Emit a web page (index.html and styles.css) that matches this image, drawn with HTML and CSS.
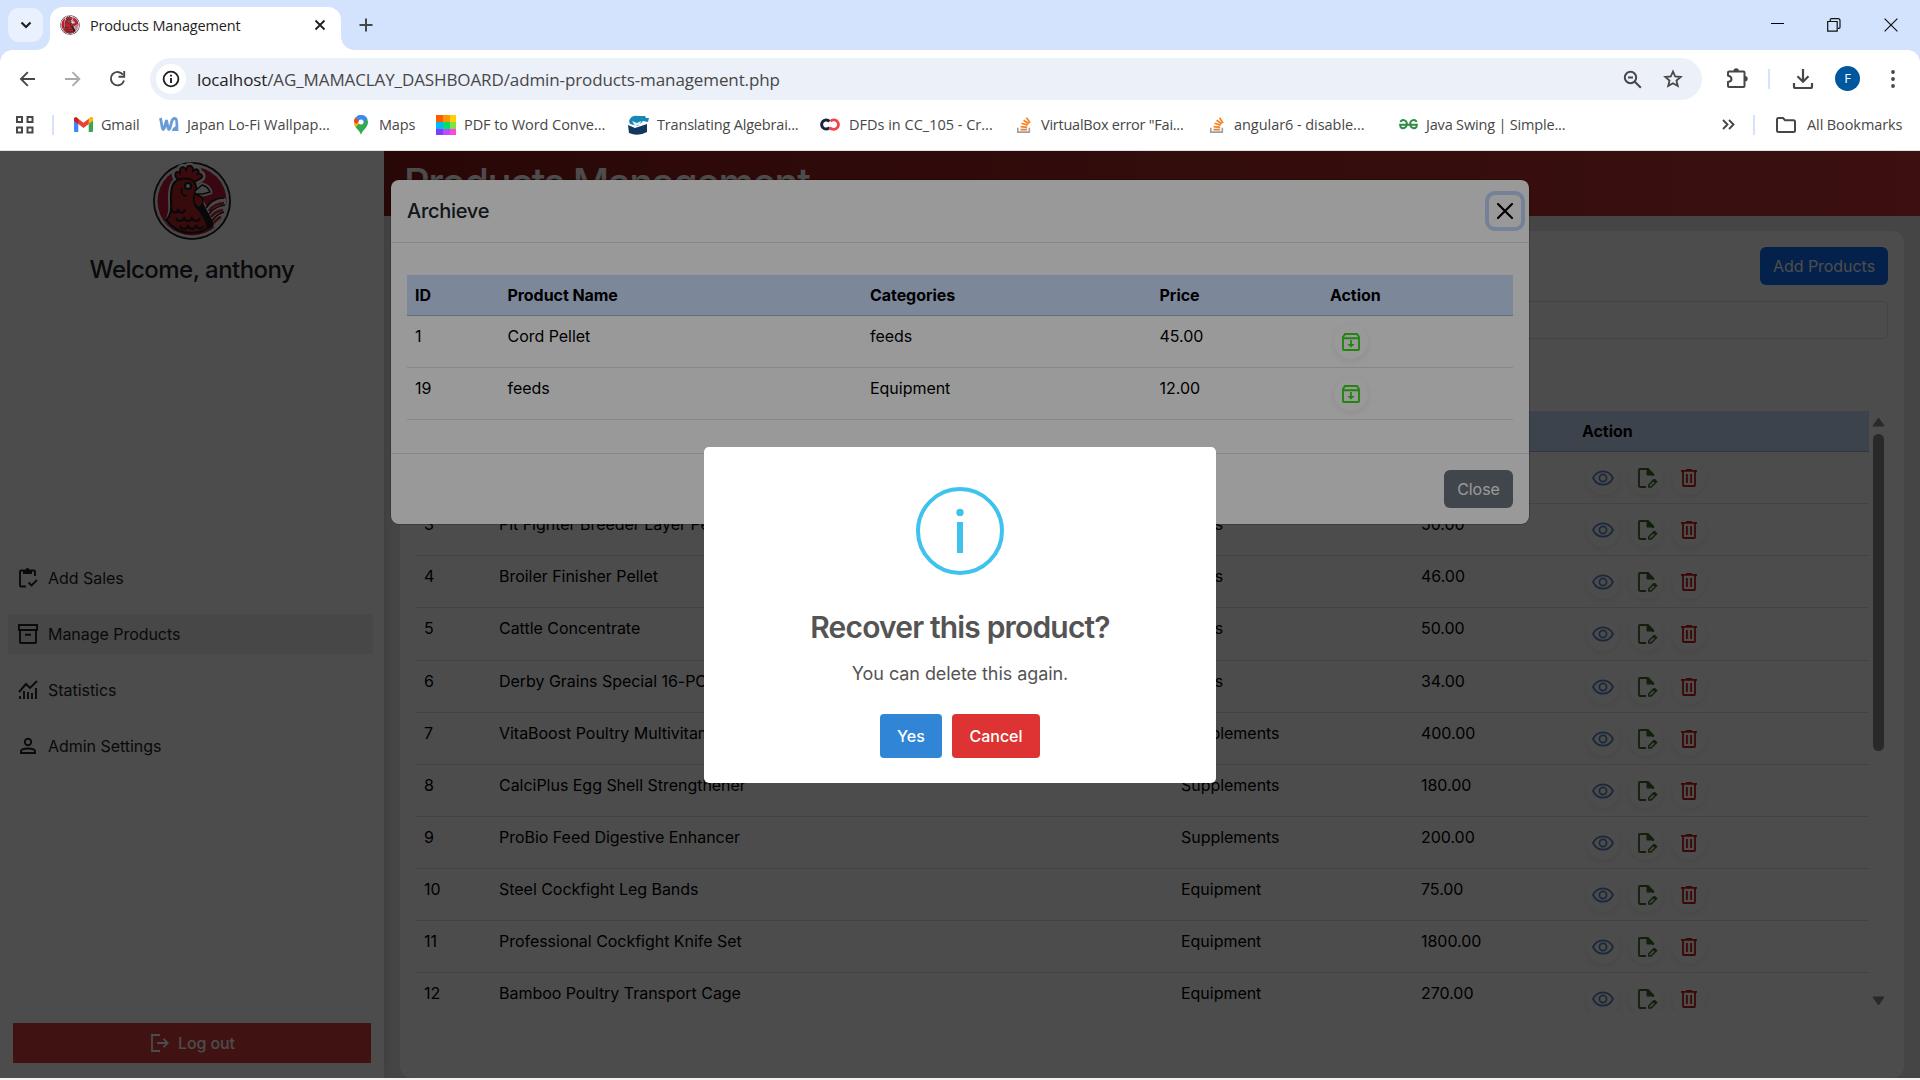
FILE: index.html
```html
<!DOCTYPE html>
<html lang="en">
<head>
<meta charset="utf-8">
<title>Products Management</title>
<link rel="stylesheet" href="styles.css">
</head>
<body>
<svg class="defs" width="0" height="0" aria-hidden="true">
  <symbol id="rooster" viewBox="0 0 80 80">
    <circle cx="40" cy="40" r="39" fill="#1d1d1f"/>
    <circle cx="40" cy="40" r="37.200" fill="#f4f0ef"/>
    <circle cx="40" cy="40" r="34.500" fill="#c0193a"/>
    <g fill="#f4f0ef" stroke="#f4f0ef" stroke-width="7" stroke-linejoin="round">
      <path d="M25 18c-4-6 0-9 3-6-1-6 4-8 6-3 1-6 8-5 7 1 4-4 7 0 5 3 4-1 6 3 2 5l-6 3-10-2z"/>
      <path d="M22 22c5-6 17-6 21 0l3 12c4 9 8 18 12 28C48 73 28 72 16 59c5-6 3-15 3-22 0-6 0-11 3-15z" stroke-width="6"/>
      <path d="M43 30l7-6c4 1 7 4 8 7l-7 2-8 0z" stroke-width="5"/>
      <path d="M56 49c4-6 9-9 16-10v12l-9 13z" stroke-width="4"/>
    </g>
    <path d="M25 18c-4-6 0-9 3-6-1-6 4-8 6-3 1-6 8-5 7 1 4-4 7 0 5 3 4-1 6 3 2 5l-6 3-10-2z" fill="#c8252f" stroke="#1d1d1f" stroke-width="1.800"/>
    <path d="M22 22c5-6 17-6 21 0l3 12c4 9 10 20 15 29C48 76 26 75 14 59c7-6 5-15 5-22 0-6 0-11 3-15z" fill="#b8242b" stroke="#1d1d1f" stroke-width="2.200"/>
    <path d="M46 40c6 7 11 14 15 22l-6 6c-2-10-6-16-13-23z" fill="#1d1d1f"/>
    <path d="M43 30l7-6c4 1 7 4 8 7l-7 2-8 0z" fill="#f4f0ef" stroke="#1d1d1f" stroke-width="1.500"/>
    <path d="M43 33c4 2 8 2 8 6s-2 8-5 7-6-8-3-13z" fill="#c8252f" stroke="#1d1d1f" stroke-width="1.800"/>
    <circle cx="36" cy="25" r="3" fill="#f4f0ef" stroke="#1d1d1f" stroke-width="2.200"/>
    <path d="M30 27c-2 5 1 8 5 8" fill="none" stroke="#1d1d1f" stroke-width="1.600"/>
    <path d="M54 47c4-7 10-10 18-10M57 53c4-6 9-8 16-9M60 60c4-6 8-8 12-9" fill="none" stroke="#1d1d1f" stroke-width="1.500"/>
    <path d="M57 50c4-6 9-7 15-8M59 56c4-5 7-6 12-7M62 62c3-4 4-5 7-6" fill="none" stroke="#c8252f" stroke-width="2.600"/>
    <path d="M19 48c2 5 6 5 7 0 1 5 6 5 7 0M24 57c2 4 6 4 8 0 2 4 6 4 8 0 2 4 6 4 8 0M28 65c2 4 6 4 8 0 2 4 6 4 8 0 2 3 6 3 8 0" fill="none" stroke="#1d1d1f" stroke-width="2"/>
  </symbol>
  <symbol id="eye" viewBox="0 0 22 16"><path d="M1 8C5.500-.9 16.500-.9 21 8 16.500 16.900 5.500 16.900 1 8z" fill="none" stroke="currentColor" stroke-width="1.700"/><circle cx="11" cy="8" r="3.600" fill="none" stroke="currentColor" stroke-width="1.700"/></symbol>
  <symbol id="edit" viewBox="0 0 20 20"><path d="M8 19H1.900a.9.900 0 0 1-.9-.9V1.900a.9.900 0 0 1 .9-.9H10l5.200 5.400V8" fill="none" stroke="currentColor" stroke-width="1.800"/><path d="M9 1v6h6.200z" fill="currentColor" stroke="currentColor"/><path d="M10.900 19v-2.200l4.700-4.700 2.200 2.200-4.700 4.700z" fill="none" stroke="currentColor" stroke-width="1.500"/><path d="M15 12.500l1.500-1.500 2.500 2.500-1.500 1.500z" fill="currentColor" stroke="currentColor"/></symbol>
  <symbol id="trash" viewBox="0 0 16 18"><path d="M0 1.900h16M5 .8h6M2 2v14.200c0 .5.300.8.800.8h10.400c.5 0 .8-.3.800-.8V2M5.900 5v9M10.100 5v9" fill="none" stroke="currentColor" stroke-width="1.800"/></symbol>
  <symbol id="recover" viewBox="0 0 18 18"><path d="M1 5.300h16M1 4.500v11.700c0 .5.300.8.800.8h14.400c.5 0 .8-.3.800-.8V4L15 1H3L1 4z" fill="none" stroke="currentColor" stroke-width="1.900"/><path d="M8.100 7h1.800v4h2.800L9 14.600 5.300 11h2.800z" fill="currentColor"/></symbol>
  <symbol id="overflow" viewBox="0 0 18 20"><path d="M2 13v5h13v-5" fill="none" stroke="#9aa0a8" stroke-width="1.800"/><path d="M5 15.300h7.500M5.200 11.800l7.400.9M6.200 8l7 2.200M8.500 4.600l6 4M11.800 1.800l4 5.800" stroke="#f48024" stroke-width="1.900"/></symbol>
</svg>

<header class="browser">
  <div class="tabstrip">
    <button class="tab-search"><svg width="12" height="8" viewBox="0 0 12 8"><path d="M1.500 1.500L6 6l4.500-4.500" fill="none" stroke="#1f1f1f" stroke-width="2.200"/></svg></button>
    <div class="tab">
      <svg class="favicon" width="20" height="20"><use href="#rooster"/></svg>
      <span class="tab-title">Products Management</span>
      <svg width="12" height="12" viewBox="0 0 12 12"><path d="M1.500 1.500l9 9M10.500 1.500l-9 9" stroke="#1f1f1f" stroke-width="1.800"/></svg>
    </div>
    <svg class="new-tab" width="14" height="14" viewBox="0 0 14 14"><path d="M7 0.500v13M.5 7h13" stroke="#474747" stroke-width="2"/></svg>
    <div class="window-controls">
      <svg width="14" height="14" viewBox="0 0 14 14"><path d="M1 5.500h13" stroke="#000"/></svg>
      <svg width="14" height="14" viewBox="0 0 14 14"><path d="M.7 3.500h9.500v9.700H.7zM3.200 3V2q0-1.300 1.300-1.300h6.500q2 0 2 2v6.600q0 1-1 1h-1" fill="none" stroke="#111" stroke-width="1.200"/></svg>
      <svg width="14" height="14" viewBox="0 0 14 14"><path d="M.6.6l12.800 12.800M13.400.6L.6 13.400" stroke="#111" stroke-width="1.200"/></svg>
    </div>
  </div>
  <div class="toolbar">
    <div class="nav-buttons">
      <svg width="18" height="18" viewBox="0 0 18 18"><path d="M16 9H2.500M8.800 2.200L2 9l6.800 6.800" fill="none" stroke="#474747" stroke-width="1.900"/></svg>
      <svg width="18" height="18" viewBox="0 0 18 18"><path d="M1 9h14M8.500 2.200L15.300 9l-6.800 6.800" fill="none" stroke="#aaa" stroke-width="1.900"/></svg>
      <svg width="18" height="18" viewBox="0 0 18 18"><path d="M14 4.700A6.700 6.700 0 1 0 15 10.500" fill="none" stroke="#474747" stroke-width="1.900"/><path d="M15.200 1v5.800H9.500" fill="none" stroke="#474747" stroke-width="1.900"/></svg>
    </div>
    <div class="omnibox">
      <span class="site-info"><svg width="18" height="18" viewBox="0 0 18 18"><circle cx="9" cy="9" r="7.400" fill="none" stroke="#1f1f1f" stroke-width="1.800"/><path d="M9 8v5M9 4.800v1.800" stroke="#1f1f1f" stroke-width="1.900"/></svg></span>
      <span class="url"><b>localhost</b>/AG_MAMACLAY_DASHBOARD/admin-products-management.php</span>
      <svg width="19" height="19" viewBox="0 0 19 19"><circle cx="7.500" cy="7.500" r="5.700" fill="none" stroke="#474747" stroke-width="2"/><path d="M11.800 11.800l6 6M5 7.500h5" stroke="#474747" stroke-width="2"/></svg>
      <svg width="20" height="20" viewBox="0 0 20 20"><path d="M10 2.500l2.200 5 5.500.5-4.200 3.600 1.300 5.400L10 14.200 5.200 17l1.300-5.400L2.300 8l5.500-.5z" fill="none" stroke="#474747" stroke-width="1.800"/></svg>
    </div>
    <svg class="ext" width="22" height="22" viewBox="0 0 22 22"><path d="M3 4.500h14.500q1 0 1 1V19q0 1-1 1H3q-1 0-1-1v-4q3.500-.5 3.500-3T2 8.500v-3q0-1 1-1z" fill="none" stroke="#474747" stroke-width="2"/><path d="M7.500 4a2.700 2.700 0 0 1 5.400 0zM19 9a2.700 2.700 0 0 1 0 5.400z" fill="#474747"/></svg>
    <i class="divider"></i>
    <svg class="download" width="22" height="22" viewBox="0 0 22 22"><path d="M11 1v12M5.500 8.300l5.500 5.500 5.500-5.500M2 15v3.500q0 1.500 1.500 1.500h15q1.500 0 1.500-1.500V15" fill="none" stroke="#474747" stroke-width="2.200"/></svg>
    <span class="avatar">F</span>
    <svg class="menu" width="4" height="18" viewBox="0 0 4 18"><circle cx="2" cy="2" r="1.900" fill="#474747"/><circle cx="2" cy="9" r="1.900" fill="#474747"/><circle cx="2" cy="16" r="1.900" fill="#474747"/></svg>
  </div>
  <nav class="bookmarks">
    <svg class="apps" width="19" height="19" viewBox="0 0 19 19"><path d="M2 2h5v5H2zM12.500 2h5v5h-5zM2 12.500h5v5H2zM12.500 12.500h5v5h-5z" fill="none" stroke="#474747" stroke-width="2"/></svg>
    <i class="divider"></i>
    <a class="bm gmail"><svg width="19" height="15" viewBox="0 0 19 15"><path d="M0 2v12q0 1 1 1h3.300V6z" fill="#4285f4"/><path d="M14.700 6v9H18q1 0 1-1V2z" fill="#34a853"/><path d="M0 2.500Q0 0 2.300.3l7.200 5.500L16.700.3Q19 0 19 2.500l-1 2-8.500 6.500L1 4.500z" fill="#ea4335"/><path d="M14.700 2v5L19 3.800V2.500Q19 0 16.700.3z" fill="#fbbc04"/><path d="M0 2.500v1.300L4.300 7V2L2.300.3Q0 0 0 2.500z" fill="#c5221f"/></svg><span>Gmail</span></a>
    <a class="bm japan"><svg width="20" height="15" viewBox="0 0 20 15"><path d="M1.500 1l1.800 10q.8 3 2 0L7.500 3l1.500 8q.8 3 2 0L13 3.500q1.500-3 4-1.500 1 1 1 12" fill="none" stroke="#6a9bd8" stroke-width="2.800"/><path d="M13 14q0-4 5-5v5z" fill="#6a9bd8"/></svg><span>Japan Lo-Fi Wallpap...</span></a>
    <a class="bm maps"><svg width="14" height="20" viewBox="0 0 14 20"><path d="M7 20C6 15 0 13 0 7a7 7 0 0 1 14 0c0 6-6 8-7 13z" fill="#34a853"/><path d="M0 7a7 7 0 0 1 2-5l5 5-5.500 5Q0 9.500 0 7z" fill="#fbbc04"/><path d="M0 6.500Q0 4.500 1.800 2.400L6 6 2 9z" fill="#ea4335"/><path d="M1.800 2.400Q4 0 7 0q4.500 0 6.400 4L8 9 5 6z" fill="#4285f4"/><circle cx="7" cy="7" r="2.500" fill="#fff"/></svg><span>Maps</span></a>
    <a class="bm pdf"><svg width="20" height="20" viewBox="0 0 20 20"><path d="M0 0h7v7H0z" fill="#ff5a00"/><path d="M7 0h7v7H7z" fill="#ff9500"/><path d="M14 0h6v7h-6z" fill="#ffd000"/><path d="M0 7h7v7H0z" fill="#00b8f5"/><path d="M7 7h7v7H7z" fill="#00e06a"/><path d="M14 7h6v7h-6z" fill="#83e043"/><path d="M0 14h7v6H0z" fill="#7d3cff"/><path d="M7 14h7v6H7z" fill="#b94cff"/><path d="M14 14h6v6h-6z" fill="#ff45e0"/></svg><span>PDF to Word Conve...</span></a>
    <a class="bm trans"><svg width="21" height="20" viewBox="0 0 21 20"><path d="M1 6Q3 0 10 1l7 0 1 2 3 0-1 4-5-1-5 5L2 9z" fill="#1788b5"/><path d="M0 10l7 3 12-4v8q-9 5-18 1z" fill="#13385f"/><path d="M4 6l5 2 4-2-1 4-5 1z" fill="#dff2f8"/></svg><span>Translating Algebrai...</span></a>
    <a class="bm dfd"><svg width="21" height="13" viewBox="0 0 21 13"><path d="M9.500 3.500A4.500 4.500 0 1 0 9.500 9.500" fill="none" stroke="#1b2440" stroke-width="3"/><path d="M9.500 9.500q2 2 4.500 1.800a4.700 4.700 0 1 0-3.500-8" fill="none" stroke="#f0434b" stroke-width="2.800"/></svg><span>DFDs in CC_105 - Cr...</span></a>
    <a class="bm vbox"><svg width="16" height="18"><use href="#overflow"/></svg><span>VirtualBox error "Fai...</span></a>
    <a class="bm ang"><svg width="16" height="18"><use href="#overflow"/></svg><span>angular6 - disable...</span></a>
    <a class="bm java"><svg width="19" height="11" viewBox="0 0 19 11"><path d="M1.200 2.800Q4-.5 7 2.300q2 3-.5 6-3 2.200-5-.5L1.200 5.800h16.600l-.3 2q-2 2.700-5 .5-2.500-3-.5-6Q15-.5 17.800 2.800" fill="none" stroke="#2f8d46" stroke-width="2"/></svg><span>Java Swing | Simple...</span></a>
    <svg class="more" width="13" height="11" viewBox="0 0 13 11"><path d="M1 1l4.500 4.500L1 10M7 1l4.500 4.500L7 10" fill="none" stroke="#474747" stroke-width="1.900"/></svg>
    <i class="divider last"></i>
    <a class="bm all"><svg width="20" height="16" viewBox="0 0 20 16"><path d="M1 2.500Q1 1 2.500 1H7l2 2.200h8.500q1.500 0 1.500 1.500v8.800q0 1.500-1.500 1.500h-15Q1 15 1 13.500z" fill="none" stroke="#474747" stroke-width="2"/></svg><span>All Bookmarks</span></a>
  </nav>
</header>

<div class="page">
  <aside class="sidebar">
    <svg class="logo" width="80" height="80"><use href="#rooster"/></svg>
    <h4 class="welcome">Welcome, anthony</h4>
    <nav class="side-nav">
      <a><svg width="20" height="20" viewBox="0 0 20 20"><path d="M17 8V3.500q0-1-1-1H3q-1 0-1 1V17.500q0 1 1 1h5M10.500 14.500l3 3L19 12" fill="none" stroke="currentColor" stroke-width="1.900"/><path d="M5 2h2.500a2 2 0 0 1 4 0H14v4H5z" fill="currentColor"/></svg>Add Sales</a>
      <a class="active"><svg width="20" height="20" viewBox="0 0 20 20"><path d="M1 1h18v5H1zM2 6v12.200q0 .8.800.8h14.400q.8 0 .8-.8V6M7 10.800h6" fill="none" stroke="currentColor" stroke-width="1.900"/></svg>Manage Products</a>
      <a><svg width="20" height="20" viewBox="0 0 20 20"><path d="M1 12l7-8 4 4 7-7" fill="none" stroke="currentColor" stroke-width="1.900"/><path d="M2 19v-3M6 19v-8M10 19v-7M14 19v-6M18 19V8" stroke="currentColor" stroke-width="1.900"/></svg>Statistics</a>
      <a><svg width="20" height="20" viewBox="0 0 20 20"><circle cx="10" cy="6" r="3.200" fill="none" stroke="currentColor" stroke-width="1.900"/><path d="M3 17v-1.500c0-4 14-4 14 0V17z" fill="none" stroke="currentColor" stroke-width="1.900"/></svg>Admin Settings</a>
    </nav>
    <a class="logout"><svg width="18" height="18" viewBox="0 0 18 18"><path d="M9 1H1v16h8M6 9h10M12.500 4.800L16.700 9l-4.200 4.200" fill="none" stroke="currentColor" stroke-width="1.800"/></svg>Log out</a>
  </aside>
  <main class="main">
    <div class="banner"><h1>Products Management</h1></div>
    <section class="card">
      <div class="card-top"><button class="btn primary">Add Products</button></div>
      <div class="search"></div>
      <div class="table-scroll">
        <div class="table products">
          <div class="tr th"><span>ID</span><span>Product Name</span><span>Categories</span><span>Price</span><span>Action</span></div>
          <div class="tr"><span></span><span></span><span></span><span></span><span class="acts"><i class="c-eye"><svg width="22" height="16"><use href="#eye"/></svg></i><i class="c-edit"><svg width="20" height="20"><use href="#edit"/></svg></i><i class="c-del"><svg width="16" height="18"><use href="#trash"/></svg></i></span></div>
          <div class="tr"><span>3</span><span>Pit Fighter Breeder Layer Pellet</span><span>feeds</span><span>50.00</span><span class="acts"><i class="c-eye"><svg width="22" height="16"><use href="#eye"/></svg></i><i class="c-edit"><svg width="20" height="20"><use href="#edit"/></svg></i><i class="c-del"><svg width="16" height="18"><use href="#trash"/></svg></i></span></div>
          <div class="tr"><span>4</span><span>Broiler Finisher Pellet</span><span>feeds</span><span>46.00</span><span class="acts"><i class="c-eye"><svg width="22" height="16"><use href="#eye"/></svg></i><i class="c-edit"><svg width="20" height="20"><use href="#edit"/></svg></i><i class="c-del"><svg width="16" height="18"><use href="#trash"/></svg></i></span></div>
          <div class="tr"><span>5</span><span>Cattle Concentrate</span><span>feeds</span><span>50.00</span><span class="acts"><i class="c-eye"><svg width="22" height="16"><use href="#eye"/></svg></i><i class="c-edit"><svg width="20" height="20"><use href="#edit"/></svg></i><i class="c-del"><svg width="16" height="18"><use href="#trash"/></svg></i></span></div>
          <div class="tr"><span>6</span><span>Derby Grains Special 16-PC</span><span>feeds</span><span>34.00</span><span class="acts"><i class="c-eye"><svg width="22" height="16"><use href="#eye"/></svg></i><i class="c-edit"><svg width="20" height="20"><use href="#edit"/></svg></i><i class="c-del"><svg width="16" height="18"><use href="#trash"/></svg></i></span></div>
          <div class="tr"><span>7</span><span>VitaBoost Poultry Multivitamins</span><span>Supplements</span><span>400.00</span><span class="acts"><i class="c-eye"><svg width="22" height="16"><use href="#eye"/></svg></i><i class="c-edit"><svg width="20" height="20"><use href="#edit"/></svg></i><i class="c-del"><svg width="16" height="18"><use href="#trash"/></svg></i></span></div>
          <div class="tr"><span>8</span><span>CalciPlus Egg Shell Strengthener</span><span>Supplements</span><span>180.00</span><span class="acts"><i class="c-eye"><svg width="22" height="16"><use href="#eye"/></svg></i><i class="c-edit"><svg width="20" height="20"><use href="#edit"/></svg></i><i class="c-del"><svg width="16" height="18"><use href="#trash"/></svg></i></span></div>
          <div class="tr"><span>9</span><span>ProBio Feed Digestive Enhancer</span><span>Supplements</span><span>200.00</span><span class="acts"><i class="c-eye"><svg width="22" height="16"><use href="#eye"/></svg></i><i class="c-edit"><svg width="20" height="20"><use href="#edit"/></svg></i><i class="c-del"><svg width="16" height="18"><use href="#trash"/></svg></i></span></div>
          <div class="tr"><span>10</span><span>Steel Cockfight Leg Bands</span><span>Equipment</span><span>75.00</span><span class="acts"><i class="c-eye"><svg width="22" height="16"><use href="#eye"/></svg></i><i class="c-edit"><svg width="20" height="20"><use href="#edit"/></svg></i><i class="c-del"><svg width="16" height="18"><use href="#trash"/></svg></i></span></div>
          <div class="tr"><span>11</span><span>Professional Cockfight Knife Set</span><span>Equipment</span><span>1800.00</span><span class="acts"><i class="c-eye"><svg width="22" height="16"><use href="#eye"/></svg></i><i class="c-edit"><svg width="20" height="20"><use href="#edit"/></svg></i><i class="c-del"><svg width="16" height="18"><use href="#trash"/></svg></i></span></div>
          <div class="tr"><span>12</span><span>Bamboo Poultry Transport Cage</span><span>Equipment</span><span>270.00</span><span class="acts"><i class="c-eye"><svg width="22" height="16"><use href="#eye"/></svg></i><i class="c-edit"><svg width="20" height="20"><use href="#edit"/></svg></i><i class="c-del"><svg width="16" height="18"><use href="#trash"/></svg></i></span></div>
        </div>
        <div class="scrollbar">
          <svg width="13" height="10" viewBox="0 0 13 10"><path d="M6.500 1L12 9H1z" fill="#8b8b8b" stroke="#8b8b8b" stroke-linejoin="round"/></svg>
          <i class="thumb"></i>
          <svg class="down" width="13" height="10" viewBox="0 0 13 10"><path d="M6.500 9L12 1H1z" fill="#8b8b8b" stroke="#8b8b8b" stroke-linejoin="round"/></svg>
        </div>
      </div>
    </section>
  </main>

  <div class="backdrop">
    <div class="modal">
      <div class="modal-header"><h5>Archieve</h5><button class="btn-close"><svg width="16" height="16" viewBox="0 0 16 16"><path d="M1 1l14 14M15 1L1 15" stroke="#000" stroke-width="2.200" stroke-linecap="round"/></svg></button></div>
      <div class="modal-body">
        <div class="table archive">
          <div class="tr th"><span>ID</span><span>Product Name</span><span>Categories</span><span>Price</span><span>Action</span></div>
          <div class="tr"><span>1</span><span>Cord Pellet</span><span>feeds</span><span>45.00</span><span class="acts"><i class="c-rec"><svg width="18" height="18"><use href="#recover"/></svg></i></span></div>
          <div class="tr"><span>19</span><span>feeds</span><span>Equipment</span><span>12.00</span><span class="acts"><i class="c-rec"><svg width="18" height="18"><use href="#recover"/></svg></i></span></div>
        </div>
      </div>
      <div class="modal-footer"><button class="btn secondary">Close</button></div>
    </div>
  </div>

  <div class="alert-overlay">
    <div class="alert">
      <div class="alert-icon"><svg width="88" height="88" viewBox="0 0 88 88"><circle cx="44" cy="44" r="42" fill="none" stroke="#3fc3ee" stroke-width="4"/><circle cx="44" cy="25.500" r="3.700" fill="#3fc3ee"/><path d="M41 35h6v31h-6z" fill="#3fc3ee"/></svg></div>
      <h2>Recover this product?</h2>
      <p>You can delete this again.</p>
      <div class="alert-actions"><button class="yes">Yes</button><button class="cancel">Cancel</button></div>
    </div>
  </div>
</div>
</body>
</html>
```
FILE: styles.css
```css
* { box-sizing: border-box; }
body { margin: 0; width: 1920px; height: 1080px; overflow: hidden; background: #f6f2ef; font-family: Inter, "Liberation Sans", sans-serif; font-size: 16px; line-height: 24px; color: #000; }
h1, h2, h4, h5, p { margin: 0; }
button { border: 0; padding: 0; font: inherit; }
svg { display: block; flex: none; }
.defs { position: absolute; }

/* browser frame */
.browser { height: 151px; background: #fff; border-bottom: 1px solid #dde5e2; font-family: "Open Sans", "Noto Sans", sans-serif; color: #474747; }
.tabstrip { height: 50px; background: #d3e3fd; display: flex; align-items: flex-start; padding: 7px 22px 0 8px; }
.tab-search { width: 35px; height: 34px; margin: 1px 7px 0 0; border-radius: 11px; background: #e9f1fe; display: flex; align-items: center; justify-content: center; }
.tab { position: relative; width: 291px; height: 43px; background: #fff; border-radius: 13px 13px 0 0; display: flex; align-items: center; padding: 0 15px 7px 10px; color: #1f1f1f; font-size: 14.500px; }
.tab::before, .tab::after { content: ""; position: absolute; bottom: 0; width: 13px; height: 13px; }
.tab::before { left: -13px; background: radial-gradient(circle at 0 0, transparent 12.500px, #fff 13px); }
.tab::after { right: -13px; background: radial-gradient(circle at 100% 0, transparent 12.500px, #fff 13px); }
.tab-title { flex: 1; margin-left: 10px; padding-top: 1px; white-space: nowrap; letter-spacing: -.17px; }
.new-tab { margin: 11px 0 0 18px; }
.window-controls { margin: 11px 0 0 auto; display: flex; gap: 43px; }
.toolbar { height: 50px; padding-top: 8px; display: flex; align-items: flex-start; background: radial-gradient(circle at 12px 12px, #fff 11.500px, #d3e3fd 12px) 0 0 / 12px 12px no-repeat, radial-gradient(circle at 0 12px, #fff 11.500px, #d3e3fd 12px) 100% 0 / 12px 12px no-repeat, #fff; }
.nav-buttons { width: 150px; padding: 12px 0 0 19px; display: flex; gap: 27px; }
.omnibox { width: 1552px; height: 42px; border-radius: 21px; background: #ebf0f9; display: flex; align-items: center; padding: 0 19px 0 6px; gap: 21px; }
.site-info { width: 30px; height: 30px; border-radius: 50%; background: #fff; display: flex; align-items: center; justify-content: center; }
.url { flex: 1; font-size: 17px; letter-spacing: -.11px; margin-left: -10px; padding-top: 1px; white-space: nowrap; }
.url b { font-weight: 400; color: #1f1f1f; }
.ext { margin: 9px 0 0 24px; }
.divider { width: 2px; height: 20px; background: #d3e3fd; }
.toolbar .divider { margin: 11px 0 0 20px; }
.download { margin: 10px 0 0 22px; }
.avatar { width: 25px; height: 25px; margin: 8px 0 0 21px; border-radius: 50%; background: #00579e; color: #fff; font-size: 13px; line-height: 25px; text-align: center; }
.menu { margin: 12px 0 0 31px; }
.bookmarks { height: 49px; display: flex; align-items: center; padding-left: 15px; font-size: 14.500px; white-space: nowrap; }
.bookmarks .divider { margin-left: 18px; margin-right: 20px; }
.bookmarks .last { margin-right: 21px; }
.bm { display: flex; align-items: center; gap: 8px; letter-spacing: -.18px; }
.gmail { width: 85px; } .japan { width: 195px; letter-spacing: -.03px; } .maps { width: 82px; gap: 11px; } .pdf { width: 192px; letter-spacing: -.06px; } .trans { width: 192px; } .dfd { width: 196px; letter-spacing: 0; } .vbox { width: 193px; gap: 9px; letter-spacing: -.24px; } .ang { width: 190px; gap: 9px; letter-spacing: -.05px; } .java { width: 323px; } .all { gap: 11px; letter-spacing: -.1px; }

/* application */
.page { position: relative; height: 927px; display: flex; overflow: hidden; background: #fff; }
.sidebar { width: 384px; background: #fff; box-shadow: 0 0 12px rgba(0, 0, 0, .15); z-index: 1; display: flex; flex-direction: column; }
.logo { margin: 10px auto 0; }
.welcome { margin-top: 14px; text-align: center; font-size: 24px; line-height: 30px; font-weight: 500; letter-spacing: -.53px; color: #212529; }
.side-nav { margin-top: 273px; padding: 0 11px 0 8px; display: flex; flex-direction: column; gap: 16px; }
.side-nav a { height: 40px; padding-left: 10px; display: flex; align-items: center; gap: 10px; letter-spacing: -.04px; color: #212529; }
.side-nav .active { background: #eee; }
.logout { height: 40px; margin: auto 13px 15px; padding-left: 2px; background: #d93c3e; color: #fff; display: flex; align-items: center; justify-content: center; gap: 9px; font-weight: 500; letter-spacing: -.1px; }
.main { width: 1536px; background: #e9e9e9; }
.banner { height: 65px; padding: 8px 20px; background: linear-gradient(90deg, #8b1a1a, #c93636); color: #fff; }
.banner h1 { font-size: 40px; line-height: 48px; font-weight: 500; letter-spacing: -1.450px; white-space: nowrap; }
.card { width: 1504px; height: 847px; margin: 15px 0 0 16px; padding: 16px; border-radius: 12px; background: #fff; }
.card-top { display: flex; justify-content: flex-end; }
.btn { height: 38px; border-radius: 6px; color: #fff; font-size: 16px; letter-spacing: -.04px; }
.primary { width: 128px; background: #0d6efd; }
.search { height: 38px; margin: 16px 0 72px; border: 1px solid #dee2e6; border-radius: 6px; }
.table-scroll { height: 600px; display: flex; overflow: hidden; }
.table .tr { display: grid; height: 52.150px; border-bottom: 1px solid #dee2e6; letter-spacing: -.03px; }
.products { width: 1453px; }
.products .tr { grid-template-columns: 75px 682px 240px 161px 1fr; }
.archive .tr { grid-template-columns: 92.500px 362.500px 289.500px 170.500px 1fr; height: 52.200px; }
.tr span { padding: 8px 0 0 8px; white-space: nowrap; }
.table .th { height: 41px; background: #cfe2ff; border-bottom-color: #a6b5cc; font-weight: 700; letter-spacing: -.06px; }
.tr .acts { display: flex; gap: 9px; padding: 9px 0 0 12px; }
.acts i { width: 34px; height: 34px; border-radius: 50%; display: flex; align-items: center; justify-content: center; box-shadow: 0 2px 6px rgba(0, 0, 0, .08); }
.c-edit svg { margin-left: 3px; }
.c-eye { color: #5c88c4; } .c-edit { color: #3b6b26; } .c-del { color: #c41c16; } .c-rec { color: #3ddc1f; }
.scrollbar { width: 19px; display: flex; flex-direction: column; align-items: center; padding: 6px 0 5px; }
.thumb { width: 11px; height: 317px; margin-top: 7px; border-radius: 6px; background: #8b8b8b; }
.down { margin-top: auto; }

.backdrop, .alert-overlay { position: absolute; inset: 0; z-index: 2; }
.backdrop { background: rgba(0, 0, 0, .5); }
.modal { width: 1138px; height: 344px; margin: 29px 0 0 391px; border-radius: 8px; background: #fff; box-shadow: 0 0 0 1px rgba(0, 0, 0, .18); }
.modal-header { height: 63px; padding: 0 8px 0 16px; border-bottom: 1px solid #dee2e6; display: flex; align-items: center; justify-content: space-between; }
.modal-header h5 { font-size: 20px; font-weight: 500; letter-spacing: -.28px; color: #212529; }
.btn-close { width: 32px; height: 32px; border-radius: 6px; background: none; display: flex; align-items: center; justify-content: center; box-shadow: 0 0 0 4px #c2d8fb; }
.modal-body { height: 210px; padding: 32px 16px 0; }
.modal-footer { height: 71px; border-top: 1px solid #dee2e6; padding: 16px; display: flex; justify-content: flex-end; }
.secondary { width: 69px; background: #6c757d; }

.alert-overlay { z-index: 3; background: rgba(0, 0, 0, .4); }
.alert { width: 512px; height: 336px; margin: 296px auto 0; border-radius: 5px; background: #fff; color: #545454; text-align: center; padding-top: 40px; }
.alert-icon { display: flex; justify-content: center; }
.alert h2 { margin-top: 34px; font-size: 30px; line-height: 36px; font-weight: 600; letter-spacing: -.83px; }
.alert p { margin-top: 17px; font-size: 18px; line-height: 24px; letter-spacing: -.07px; }
.alert-actions { margin-top: 28px; display: flex; justify-content: center; gap: 10px; }
.alert-actions button { height: 44px; border-radius: 4px; color: #fff; font-weight: 500; }
.yes { width: 62px; background: #3085d6; }
.cancel { width: 88px; background: #d33; }
```
